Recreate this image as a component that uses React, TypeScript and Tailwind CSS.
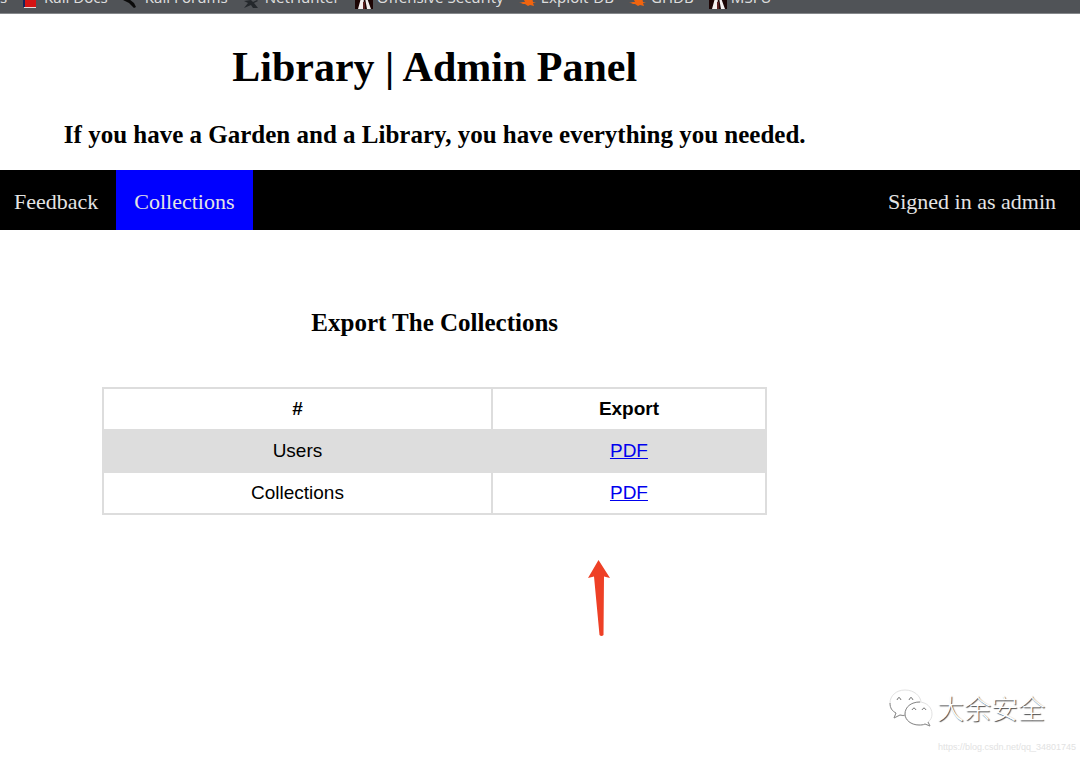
import type { ReactNode } from "react";

type Bookmark = { label: string; icon: ReactNode };

const DragonIcon = () => (
  <>
    <rect width="18" height="18" fill="#1c0505" />
    <path d="M3 18 6 7h3l-1 11zM10 7h2l4 11h-4z" fill="#f4efef" />
    <path d="M8 11h2v7H8z" fill="#5b2020" />
  </>
);

const BugIcon = () => (
  <path d="M0 11 6 11 4 7l5 2 4-3 1 5 3 1-3 0 1 3-4-1-2 1-3-2-4 0 2-1z" fill="#f0640f" />
);

const bookmarks: Bookmark[] = [
  {
    label: "Kali Docs",
    icon: (
      <>
        <rect x="1" width="13" height="16" fill="#d41414" />
        <rect x="1" width="2" height="16" fill="#13245c" />
        <rect x="2" y="16" width="12" height="1" fill="#e9dcdc" />
      </>
    ),
  },
  {
    label: "Kali Forums",
    icon: <path d="M0 9 6 12l5 5 2-1-2-4-5-4z" fill="#0b0b0b" />,
  },
  {
    label: "NetHunter",
    icon: <path d="M1 10 8 9l2 2 4-2 1 1-4 2 4 5h-5l-2-3-7 3 4-5z" fill="#24282c" />,
  },
  { label: "Offensive Security", icon: <DragonIcon /> },
  { label: "Exploit-DB", icon: <BugIcon /> },
  { label: "GHDB", icon: <BugIcon /> },
  { label: "MSFU", icon: <DragonIcon /> },
];

const rows = ["Users", "Collections"];

export default function App() {
  return (
    <div className="relative min-h-screen overflow-hidden bg-white font-['Liberation_Serif','Noto_Sans_CJK_SC',serif] text-black">
      <nav
        aria-label="Bookmarks"
        className="flex h-[14px] items-end overflow-hidden border-b border-[#85888b] bg-[#505357] pb-1.5 font-['Noto_Sans',sans-serif] text-[15px] leading-5 text-[#dcdcdc]"
      >
        <a href="#start" className="w-[22px] shrink-0">s</a>
        <ul className="flex gap-[15px]">
          {bookmarks.map((b) => (
            <li key={b.label}>
              <a href="#bookmark" className="flex items-end gap-1 whitespace-nowrap">
                <svg viewBox="0 0 18 18" className="-mb-0.5 size-[18px] shrink-0" aria-hidden="true">
                  {b.icon}
                </svg>
                {b.label}
              </a>
            </li>
          ))}
        </ul>
      </nav>

      <header className="w-[80.5%] pt-7 pb-5 text-center font-bold">
        <h1 className="text-[42px] leading-[50px]">Library | Admin Panel</h1>
        <h2 className="pt-7 text-[25px] leading-[30px]">
          If you have a Garden and a Library, you have everything you needed.
        </h2>
      </header>

      <nav aria-label="Main" className="flex h-[60px] items-stretch bg-black text-[22px] text-[#e4e4e4]">
        <a href="#feedback" className="flex items-center pt-0.5 pr-[18px] pl-[14px]">Feedback</a>
        <a href="#collections" className="flex items-center bg-[#0000ff] px-[18px] pt-0.5">Collections</a>
        <span className="ml-auto flex items-center pt-0.5 pr-6">Signed in as admin</span>
      </nav>

      <main className="w-[80.5%]">
        <h2 className="pt-[78px] text-center text-[25px] leading-[30px] font-bold">Export The Collections</h2>
        <table className="mx-auto mt-[49px] w-[76.5%] table-fixed border-collapse border-2 border-[#dddddd] text-center font-['Liberation_Sans',sans-serif] text-[19px] leading-6">
          <thead>
            <tr className="h-[42px]">
              <th className="w-[58.6%] border-2 border-[#dddddd]">#</th>
              <th className="border-2 border-[#dddddd]">Export</th>
            </tr>
          </thead>
          <tbody>
            {rows.map((row) => (
              <tr key={row} className="h-[42px] odd:bg-[#dddddd]">
                <td className="border-2 border-[#dddddd]">{row}</td>
                <td className="border-2 border-[#dddddd]">
                  <a href="#pdf" className="text-[#0000ee] underline">PDF</a>
                </td>
              </tr>
            ))}
          </tbody>
        </table>
      </main>

      <svg
        viewBox="0 0 22 77"
        className="absolute top-[560px] left-[588px] h-[77px] w-[22px]"
        aria-hidden="true"
      >
        <path d="M10.5 0 22 18 16 16.500 15.500 75Q13.500 77 11.500 75L6 16.500 0 18Z" fill="#ee4026" />
      </svg>

      <div className="absolute right-[35px] bottom-[29px] flex items-center gap-1">
        <svg viewBox="0 0 44 40" className="h-10 w-11" fill="white" aria-hidden="true">
          <path d="M16 2C7 2 1 8 1 15c0 5 2 8 6 10l-2 5 6-3c3 1 6 1 9 0 10-1 12-7 12-12C32 8 25 2 16 2Z" stroke="#e2e2e2" />
          <path d="M1 15c0 5 2 8 6 10l-2 5 6-3q3 1 6 0" stroke="#8a8a8a" fill="none" />
          <path d="M30 14c-8 0-14 5-14 12 0 6 6 11 14 11 2 0 4 0 6-1l5 2-2-4c3-2 4-5 4-8 0-7-6-12-13-12Z" stroke="#e2e2e2" />
          <path d="M31 14c-9 0-15 5-15 12 0 6 6 11 14 11 2 0 4 0 6-1l5 2-2-4" stroke="#8a8a8a" fill="none" />
          <path d="M8 12q2-5 4 0M20 12q2-5 4 0M23 22q2-4 4 0M33 22q2-4 4 0" stroke="#777" fill="none" />
        </svg>
        <span className="font-['Noto_Sans_CJK_SC',sans-serif] text-[27px] leading-10 font-light text-white [text-shadow:1px_1px_1px_#444]">
          大余安全
        </span>
      </div>
      <p className="absolute right-1 bottom-1 font-['Liberation_Sans',sans-serif] text-[9px] leading-3 text-[#e2e2e2]">
        https://blog.csdn.net/qq_34801745
      </p>
    </div>
  );
}
